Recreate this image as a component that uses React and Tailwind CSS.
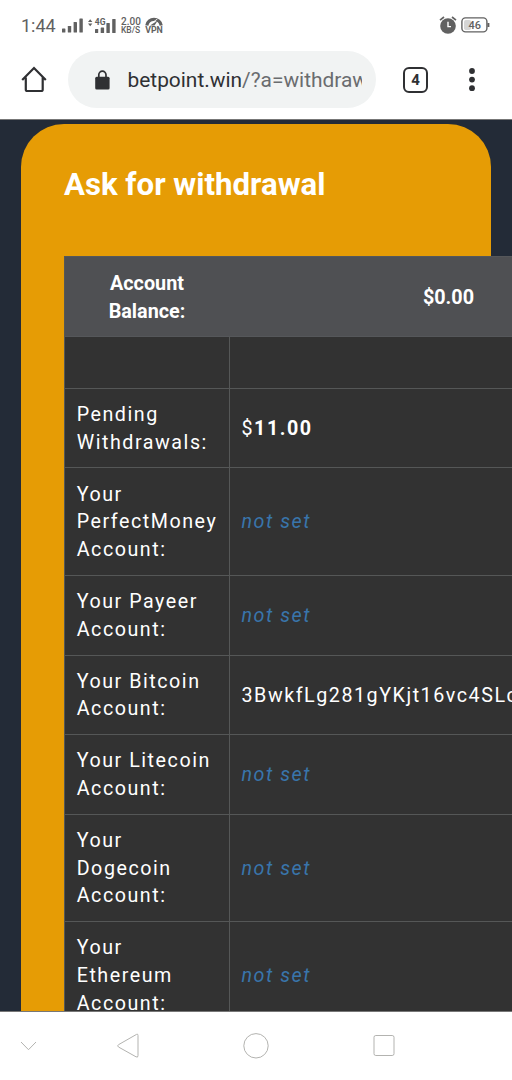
const rows = [
  { label: [""], height: "h-[51.4px]" },
  { label: ["Pending", "Withdrawals:"], amount: "11.00", height: "h-[79.7px]" },
  { label: ["Your", "PerfectMoney", "Account:"], height: "h-[107.4px]", unset: true },
  { label: ["Your Payeer", "Account:"], height: "h-[79.7px]", unset: true },
  {
    label: ["Your Bitcoin", "Account:"],
    value: "3BwkfLg281gYKjt16vc4SLc",
    height: "h-[79.6px]",
  },
  { label: ["Your Litecoin", "Account:"], height: "h-[79.6px]", unset: true },
  { label: ["Your", "Dogecoin", "Account:"], height: "h-[107.4px]", unset: true },
  { label: ["Your", "Ethereum", "Account:"], height: "h-[107.4px]", unset: true },
];

function Signal() {
  return (
    <svg width="21" height="15" viewBox="0 0 21 15" fill="#616161">
      <rect x="0" y="10.5" width="3.4" height="4" rx="0.6" />
      <rect x="5.8" y="8" width="3.4" height="6.5" rx="0.6" />
      <rect x="11.6" y="4" width="3.4" height="10.5" rx="0.6" />
      <rect x="17.4" y="0.5" width="3.4" height="14" rx="0.6" />
    </svg>
  );
}

function MobileData() {
  return (
    <svg width="28" height="16" viewBox="0 0 28 16" fill="#616161">
      <path d="M0 4 2.2 1.2 4.4 4ZM0 5.4 2.2 8.2 4.4 5.4Z" />
      <rect x="7" y="11" width="3.2" height="4" rx="0.6" />
      <rect x="12.7" y="9.4" width="3.4" height="5.6" rx="0.6" />
      <rect x="18.4" y="5" width="3.4" height="10" rx="0.6" />
      <rect x="24.2" y="1" width="3.4" height="14" rx="0.6" />
      <text x="6.8" y="7.2" fontSize="8.5" fontWeight="700" fontFamily="Roboto, sans-serif">
        4G
      </text>
    </svg>
  );
}

function StatusBar() {
  return (
    <div className="flex h-[50px] items-start justify-between pl-[21px] pr-[22px] pt-4 text-[#616161]">
      <div className="flex items-start">
        <span className="w-[41px] text-[18px] leading-[20px]">1:44</span>
        <span className="mt-[2px]">
          <Signal />
        </span>
        <span className="ml-[5px] mt-[1.5px]">
          <MobileData />
        </span>
        <span className="ml-[5px] mt-px flex w-[20px] flex-col whitespace-nowrap font-medium">
          <span className="text-[10px] leading-[9px]">2.00</span>
          <span className="text-[8.5px] leading-[8px]">KB/S</span>
        </span>
        <span className="ml-[4px] mt-px flex flex-col items-center">
          <svg width="18" height="9" viewBox="0 0 18 9" fill="none">
            <path d="M1.8 8.4A7.3 7.3 0 0 1 16.2 8.4" stroke="#616161" strokeWidth="3.2" />
            <path d="M5 8.6 12.8 3.6 9.5 8.6Z" fill="#616161" />
            <path d="M8 5.2 12.4 2" stroke="#fff" strokeWidth="0.9" />
          </svg>
          <span className="text-[8.8px] font-bold leading-[9px]">VPN</span>
        </span>
      </div>
      <div className="flex items-start">
        <svg width="18" height="18" viewBox="0 0 18 18" fill="none">
          <circle cx="9" cy="10" r="7.8" fill="#616161" />
          <path d="M1 4.2 5 1M17 4.2 13 1" stroke="#616161" strokeWidth="1.7" />
          <path d="M9 5.8V10.6H12" stroke="#fff" strokeWidth="1.4" />
        </svg>
        <svg className="ml-[4px]" width="29" height="17" viewBox="0 0 29 17" fill="none">
          <rect x="0.9" y="1.9" width="25" height="14" rx="3.6" stroke="#616161" strokeWidth="1.4" />
          <rect x="3" y="4" width="7" height="10" rx="1.8" fill="#d5d5d5" />
          <path d="M27.4 7V11" stroke="#616161" strokeWidth="2" />
          <text x="7.5" y="13" fontSize="11" fontWeight="500" fontFamily="Roboto, sans-serif" fill="#616161">
            46
          </text>
        </svg>
      </div>
    </div>
  );
}

function BrowserBar() {
  return (
    <div className="flex h-[69px] items-start">
      <svg className="ml-[21px] mt-4" width="27" height="28" viewBox="0 0 27 28" fill="none">
        <path
          d="M1.2 14 13 2.1 24.8 14M4.8 11.5V23.4Q4.8 25 6.4 25H20.1Q21.7 25 21.7 23.4V11.5"
          stroke="#2f3033"
          strokeWidth="2.2"
        />
      </svg>
      <div className="ml-[20px] mt-px flex h-[57px] w-[308px] items-center rounded-full bg-[#f1f3f3]">
        <svg className="ml-[27px]" width="15" height="20" viewBox="0 0 15 20" fill="none">
          <rect x="0.2" y="6.7" width="14.4" height="12.8" rx="1.5" fill="#2f3033" />
          <path d="M3.8 7V4.8a3.6 3.6 0 0 1 7.2 0V7" stroke="#2f3033" strokeWidth="1.7" />
        </svg>
        <div className="ml-[17.5px] mt-px w-[234px] overflow-hidden whitespace-nowrap text-[20.9px] leading-7 text-[#6a6c6f]">
          <span className="text-[#2f3033]">betpoint.win</span>/?a=withdraw
        </div>
      </div>
      <div className="ml-[27px] mt-[17px] flex h-[26px] w-[25px] items-center justify-center rounded-[6px] border-[2.5px] border-[#2f3033] text-[15px] font-bold text-[#2f3033]">
        4
      </div>
      <svg className="ml-[40px] mt-[18px]" width="8" height="24" viewBox="0 0 8 24" fill="#2f3033">
        <circle cx="4" cy="3" r="2.9" />
        <circle cx="4" cy="11.6" r="2.9" />
        <circle cx="4" cy="20.2" r="2.9" />
      </svg>
    </div>
  );
}

function AccountTable() {
  return (
    <div className="w-[604px] border-l border-[#555757] bg-[#323232] text-[19.7px] leading-[27.8px] text-white">
      <div className="flex h-[81.2px] items-center border-b border-t border-[#55575a] bg-[#4f5053] pt-[1.5px] text-center text-[19.8px] font-bold">
        <div className="w-[164px]">
          Account
          <br />
          Balance:
        </div>
        <div className="w-[439px]">$0.00</div>
      </div>
      {rows.map((row) => (
        <div
          key={row.label.join(" ")}
          className={`flex border-b border-[#555757] tracking-[1.53px] ${row.height}`}
        >
          <div className="flex w-[165px] shrink-0 flex-col justify-center whitespace-nowrap border-r border-[#555757] pl-[11.7px] pt-[1.2px]">
            {row.label.map((line) => (
              <div key={line}>{line}</div>
            ))}
          </div>
          <div className="flex items-center whitespace-nowrap pl-[11.5px] pt-[1.2px]">
            {row.amount && (
              <>
                $<b>{row.amount}</b>
              </>
            )}
            {row.value}
            {row.unset && <i className="text-[#3975ab]">not set</i>}
          </div>
        </div>
      ))}
    </div>
  );
}

function NavBar() {
  return (
    <div className="grid h-[68px] grid-cols-4 bg-white">
      <svg viewBox="0 0 128 68" width="128" height="68" fill="none" stroke="#b3b3b0">
        <path d="M21 30 28.5 37.7 36 30" />
      </svg>
      <svg className="-ml-[64px]" viewBox="0 0 128 68" width="128" height="68" fill="none" stroke="#b3b3b0">
        <path d="M72.5 22.4Q74 21.5 74 23.5V43.5Q74 46 72 44.8L54.5 35Q52.8 33.8 54.5 32.7Z" />
      </svg>
      <svg className="-ml-[64px]" viewBox="0 0 128 68" width="128" height="68" fill="none" stroke="#b3b3b0">
        <circle cx="64" cy="33.8" r="12.2" />
      </svg>
      <svg className="-ml-[64px]" viewBox="0 0 128 68" width="128" height="68" fill="none" stroke="#b3b3b0">
        <rect x="54" y="23.5" width="20" height="20" rx="1.8" />
      </svg>
    </div>
  );
}

export default function App() {
  return (
    <div className="flex h-[1080px] w-[512px] flex-col overflow-hidden bg-white font-[Roboto,sans-serif]">
      <StatusBar />
      <BrowserBar />
      <main className="h-[893px] shrink-0 overflow-hidden border-b border-t border-[#777] bg-[#232b37] pl-[21.3px] pt-[4px]">
        <section className="h-[1000px] w-[469.4px] rounded-t-[43px] bg-[#e69c05] pl-[42.7px] pt-[43px]">
          <h1 className="h-[89.2px] whitespace-nowrap text-[31.2px] font-bold leading-[36px] text-white">
            Ask for withdrawal
          </h1>
          <AccountTable />
        </section>
      </main>
      <NavBar />
    </div>
  );
}
